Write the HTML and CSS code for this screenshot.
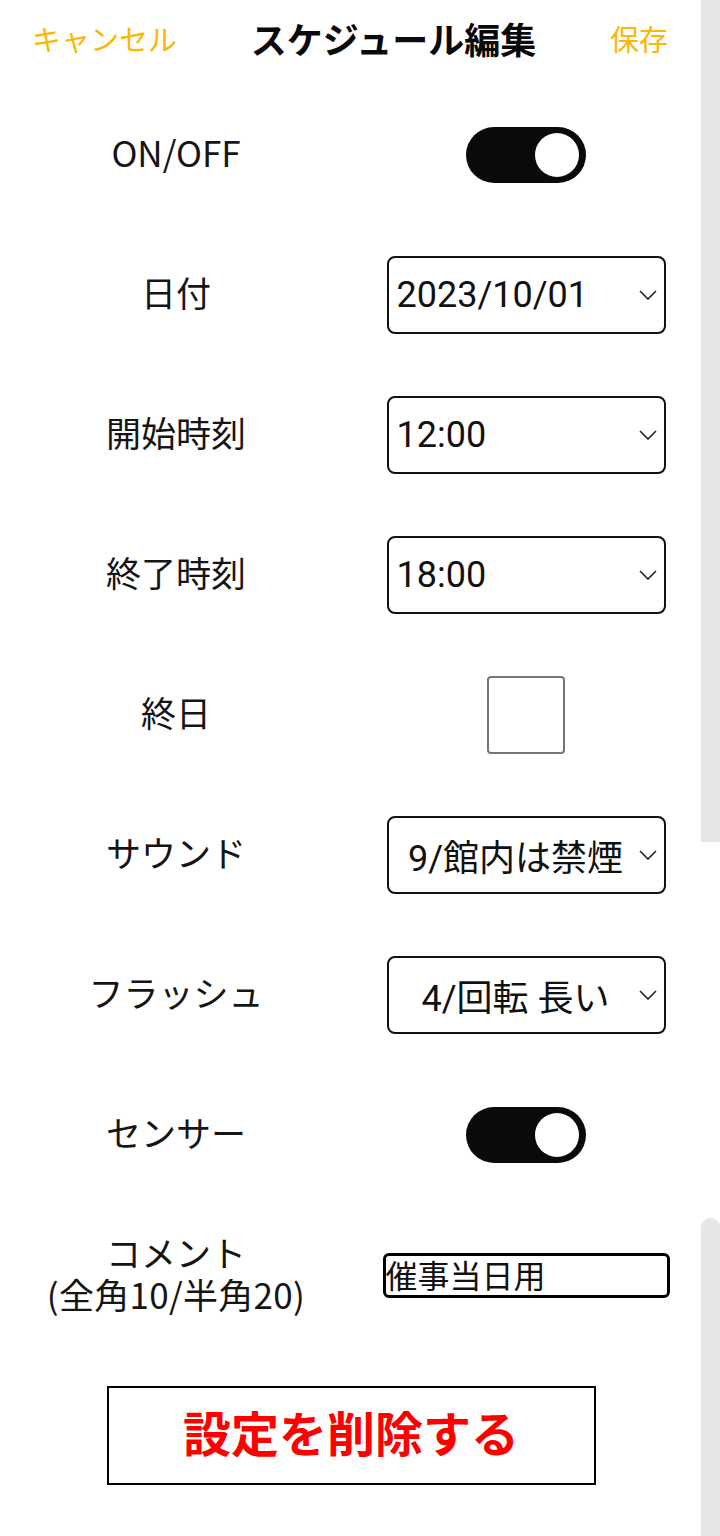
FILE: index.html
```html
<!DOCTYPE html>
<html lang="ja">
<head>
<meta charset="utf-8">
<title>スケジュール編集</title>
<link rel="stylesheet" href="styles.css">
</head>
<body>
<div class="page">
  <header class="header">
    <span class="hdr-btn">キャンセル</span>
    <span class="hdr-title">スケジュール編集</span>
    <span class="hdr-btn">保存</span>
  </header>
  <main class="form">
    <div class="row">
      <div class="label">ON/OFF</div>
      <div class="ctrl"><div class="toggle"><div class="knob"></div></div></div>
    </div>
    <div class="row">
      <div class="label">日付</div>
      <div class="ctrl"><div class="select"><span class="val">2023/10/01</span><svg class="chev" width="18" height="10" viewBox="0 0 18 10"><path d="M1 1 L9 9 L17 1" fill="none" stroke="#222" stroke-width="1.6"/></svg></div></div>
    </div>
    <div class="row">
      <div class="label">開始時刻</div>
      <div class="ctrl"><div class="select"><span class="val">12:00</span><svg class="chev" width="18" height="10" viewBox="0 0 18 10"><path d="M1 1 L9 9 L17 1" fill="none" stroke="#222" stroke-width="1.6"/></svg></div></div>
    </div>
    <div class="row">
      <div class="label">終了時刻</div>
      <div class="ctrl"><div class="select"><span class="val">18:00</span><svg class="chev" width="18" height="10" viewBox="0 0 18 10"><path d="M1 1 L9 9 L17 1" fill="none" stroke="#222" stroke-width="1.6"/></svg></div></div>
    </div>
    <div class="row">
      <div class="label">終日</div>
      <div class="ctrl"><div class="checkbox"></div></div>
    </div>
    <div class="row">
      <div class="label">サウンド</div>
      <div class="ctrl"><div class="select centered"><span class="val">9/館内は禁煙</span><svg class="chev" width="18" height="10" viewBox="0 0 18 10"><path d="M1 1 L9 9 L17 1" fill="none" stroke="#222" stroke-width="1.6"/></svg></div></div>
    </div>
    <div class="row">
      <div class="label">フラッシュ</div>
      <div class="ctrl"><div class="select centered"><span class="val">4/回転 長い</span><svg class="chev" width="18" height="10" viewBox="0 0 18 10"><path d="M1 1 L9 9 L17 1" fill="none" stroke="#222" stroke-width="1.6"/></svg></div></div>
    </div>
    <div class="row">
      <div class="label">センサー</div>
      <div class="ctrl"><div class="toggle"><div class="knob"></div></div></div>
    </div>
    <div class="row">
      <div class="label two-line"><div class="line">コメント</div><div class="line">(全角10/半角20)</div></div>
      <div class="ctrl"><div class="textinput">催事当日用</div></div>
    </div>
    <div class="actions">
      <div class="delete-btn">設定を削除する</div>
    </div>
  </main>
</div>
<div class="scroll-track"></div>
<div class="scroll-thumb"></div>
</body>
</html>
```
FILE: styles.css
```css
html, body {
  margin: 0;
  padding: 0;
  background: #fff;
}
body {
  font-family: "Noto Sans CJK JP", "Noto Sans", sans-serif;
  color: #111;
}
.page {
  width: 700px;
}
.header {
  height: 80px;
  box-sizing: border-box;
  padding: 0 32px 4px 32px;
  display: flex;
  align-items: center;
  justify-content: space-between;
}
.hdr-btn {
  color: #fbb800;
  font-size: 29px;
  line-height: 1;
}
.hdr-title {
  font-size: 36px;
  font-weight: bold;
  color: #0a0a0a;
  line-height: 1;
}
.form {
  padding-top: 5px;
}
.row {
  display: grid;
  grid-template-columns: 352px 348px;
  height: 140px;
  align-items: center;
  justify-items: center;
}
.label {
  font-size: 35px;
  line-height: 42px;
  text-align: center;
  color: #151515;
  padding-bottom: 6px;
}
.label.two-line {
  padding-bottom: 4px;
}
.label .line {
  height: 42px;
  line-height: 42px;
  white-space: nowrap;
}
.label .line + .line {
  letter-spacing: 0.3px;
}
.ctrl {
  display: flex;
  justify-content: center;
  width: 100%;
}
.toggle {
  width: 120px;
  height: 56px;
  border-radius: 28px;
  background: #0a0a0a;
  display: flex;
  align-items: center;
  justify-content: flex-end;
  padding-right: 7px;
  box-sizing: border-box;
}
.knob {
  width: 44px;
  height: 44px;
  border-radius: 50%;
  background: #fff;
}
.select {
  width: 279px;
  height: 78px;
  box-sizing: border-box;
  border: 2px solid #111;
  border-radius: 8px;
  display: flex;
  align-items: center;
  padding: 0 7px 0 8px;
  font-family: Roboto, "Noto Sans CJK JP", sans-serif;
  font-size: 36px;
  color: #111;
}
.select .val {
  flex: 1;
  white-space: nowrap;
}
.select.centered .val {
  text-align: center;
}
.chev {
  flex: none;
  margin-left: 4px;
}
.checkbox {
  width: 78px;
  height: 78px;
  box-sizing: border-box;
  border: 2px solid #767676;
  border-radius: 4px;
  background: #fff;
}
.textinput {
  width: 287px;
  height: 45px;
  box-sizing: border-box;
  border: 3px solid #000;
  border-radius: 6px;
  display: flex;
  align-items: center;
  font-size: 32px;
  line-height: 1;
  padding-bottom: 2px;
  color: #111;
  white-space: nowrap;
}
.actions {
  display: flex;
  justify-content: center;
  padding-top: 41px;
  padding-left: 2px;
}
.delete-btn {
  width: 489px;
  height: 99px;
  box-sizing: border-box;
  border: 2px solid #000;
  padding-bottom: 9px;
  display: flex;
  align-items: center;
  justify-content: center;
  color: #ff0000;
  font-size: 48px;
  font-weight: bold;
}
.scroll-track {
  position: absolute;
  top: 0;
  right: 0;
  width: 19px;
  height: 842px;
  background: #e6e6e6;
}
.scroll-thumb {
  position: absolute;
  top: 1218px;
  right: 0;
  width: 19px;
  height: 318px;
  background: #e6e6e6;
  border-radius: 10px 10px 0 0;
}
```
